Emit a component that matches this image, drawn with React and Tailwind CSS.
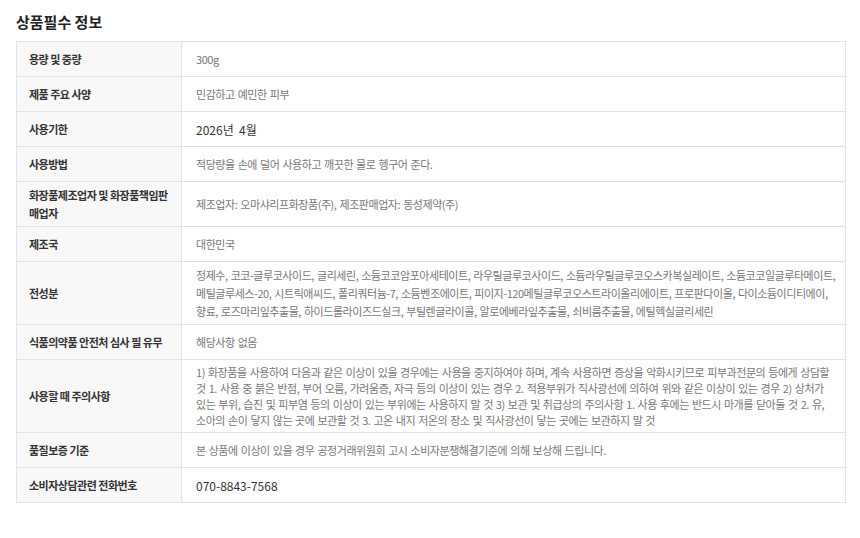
import React from "react";

const rows = [
  { label: "용량 및 중량", value: "300g" },
  { label: "제품 주요 사양", value: "민감하고 예민한 피부" },
  { label: "사용기한", value: "2026년  4월", strong: true },
  { label: "사용방법", value: "적당량을 손에 덜어 사용하고 깨끗한 물로 헹구어 준다." },
  {
    label: "화장품제조업자 및 화장품책임판매업자",
    value: "제조업자: 오마샤리프화장품(주), 제조판매업자: 동성제약(주)",
  },
  { label: "제조국", value: "대한민국" },
  {
    label: "전성분",
    lead: "leading-[18px]",
    value:
      "정제수, 코코-글루코사이드, 글리세린, 소듐코코암포아세테이트, 라우릴글루코사이드, 소듐라우릴글루코오스카복실레이트, 소듐코코일글루타메이트, 메틸글루세스-20, 시트릭애씨드, 폴리쿼터늄-7, 소듐벤조에이트, 피이지-120메틸글루코오스트라이올리에이트, 프로판다이올, 다이소듐이디티에이, 향료, 로즈마리잎추출물, 하이드롤라이즈드실크, 부틸렌글라이콜, 알로에베라잎추출물, 쇠비름추출물, 에틸헥실글리세린",
  },
  { label: "식품의약품 안전처 심사 필 유무", value: "해당사항 없음" },
  {
    label: "사용할 때 주의사항",
    lead: "leading-[16px]",
    value:
      "1) 화장품을 사용하여 다음과 같은 이상이 있을 경우에는 사용을 중지하여야 하며, 계속 사용하면 증상을 악화시키므로 피부과전문의 등에게 상담할 것 1. 사용 중 붉은 반점, 부어 오름, 가려움증, 자극 등의 이상이 있는 경우 2. 적용부위가 직사광선에 의하여 위와 같은 이상이 있는 경우 2) 상처가 있는 부위, 습진 및 피부염 등의 이상이 있는 부위에는 사용하지 말 것 3) 보관 및 취급상의 주의사항 1. 사용 후에는 반드시 마개를 닫아둘 것 2. 유, 소아의 손이 닿지 않는 곳에 보관할 것 3. 고온 내지 저온의 장소 및 직사광선이 닿는 곳에는 보관하지 말 것",
  },
  {
    label: "품질보증 기준",
    value: "본 상품에 이상이 있을 경우 공정거래위원회 고시 소비자분쟁해결기준에 의해 보상해 드립니다.",
  },
  { label: "소비자상담관련 전화번호", value: "070-8843-7568", strong: true },
];

export default function App() {
  return (
    <div
      className="bg-white min-h-[538px] px-4 pt-3"
      style={{ fontFamily: '"Noto Sans CJK KR", "Noto Sans", sans-serif' }}
    >
      <h2 className="text-[15px] leading-5 font-bold text-[#222] mb-[9px]">상품필수 정보</h2>
      <table className="w-[830px] border-collapse border border-[#e3e3e3] table-fixed">
        <colgroup>
          <col className="w-[165px]" />
          <col />
        </colgroup>
        <tbody>
          {rows.map((row) => (
            <tr key={row.label} className="border-b border-[#e3e3e3]">
              <th className="h-[35px] bg-[#f8f8f8] border-r border-[#e3e3e3] pl-3 pr-2 py-1 text-left align-middle text-[11px] leading-[18px] font-bold tracking-[-0.5px] text-[#333]">
                {row.label}
              </th>
              {row.strong ? (
                <td className="h-[35px] pl-[14px] pr-2 py-1 align-middle text-[12px] leading-[17px] text-[#333] whitespace-pre">
                  {row.value}
                </td>
              ) : (
                <td
                  className={`h-[35px] pl-[14px] pr-2 py-1 align-middle text-[11px] ${
                    row.lead || "leading-[17px]"
                  } tracking-[-0.45px] [word-spacing:1px] text-[#777] break-keep`}
                >
                  {row.value}
                </td>
              )}
            </tr>
          ))}
        </tbody>
      </table>
    </div>
  );
}
